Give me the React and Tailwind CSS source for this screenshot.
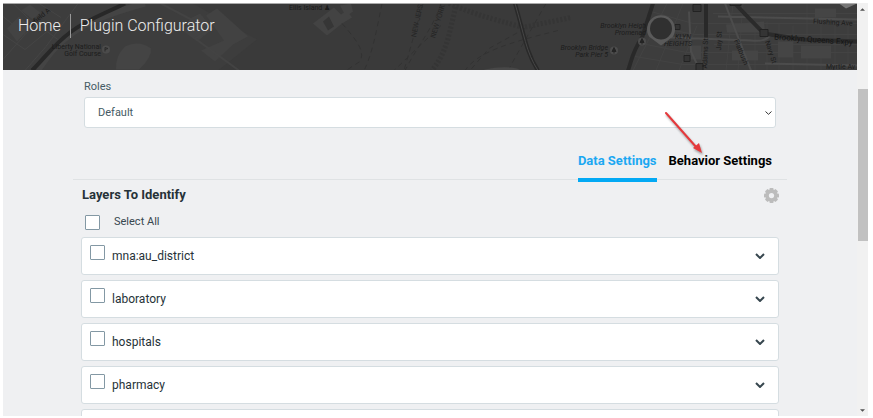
import React, { useState } from 'react';

const layers = ['mna:au_district', 'laboratory', 'hospitals', 'pharmacy'];

const checkboxClass =
  'block size-[15px] shrink-0 appearance-none rounded-[1px] border border-[#8398a4] bg-white checked:bg-[#03a9f4]';

const MapBackground = () => (
  <svg
    className="absolute inset-0 h-full w-full"
    viewBox="0 0 854 67"
    preserveAspectRatio="xMidYMid slice"
    fill="none"
    fontFamily="Roboto, sans-serif"
    aria-hidden="true"
  >
    <rect width="854" height="67" fill="#3a3a3a" />

    {/* west shore */}
    <path d="M0 0H190L254 36L215 67H0Z" fill="#3d3d3d" />
    <path d="M122 43Q136 36 148 45Q149 54 136 66H113Q112 53 122 43Z" fill="#444" />
    <path d="M187 15L197 10L210 25L194 38L181 28ZM203 12L214 5L245 33L230 41L212 58L198 47L221 37Z" fill="#424242" />
    <path d="M158 0L192 18M192 35L236 67M192 35L210 25" stroke="#434343" strokeWidth="2" />
    <path d="M0 13L22 31L45 8M0 31L22 46M10 0L33 22M22 31L0 56M22 46L44 28L63 42M36 0L58 14M75 0L43 43L22 67" stroke="#454545" />
    <path d="M4 25L16 13L28 23L14 38ZM18 7L27 1L37 9L30 16Z" fill="#434343" />
    <path d="M142 0C112 8 91 16 76 25C55 39 47 49 35 67" stroke="#444" strokeWidth="6" />
    <path d="M122 0C102 10 84 16 67 29C51 41 43 53 29 67" stroke="#282828" strokeWidth="4" />
    <circle cx="103" cy="46" r="4" fill="#4b4b4b" />
    <path d="M102 48V44L105 45L102 46" stroke="#2b2b2b" />

    {/* harbor and ferry lines */}
    <path d="M310 20L331 4L338 11L344 7L349 14L339 20L324 32ZM337 2L348 0L350 8L343 13Z" fill="#434343" />
    <path d="M320 18L326 13L331 23L325 27Z" fill="#363636" />
    <path
      d="M339 20C355 38 362 48 357 58L343 67M379 0C373 30 369 51 361 67M420 0L401 67M438 0C430 25 414 43 402 67M438 22L391 67M555 27C507 39 475 48 462 67M522 25L486 45L467 67M543 0L515 49L505 67"
      stroke="#323232"
      strokeDasharray="5 4"
    />
    <path d="M454 0C447 20 447 45 429 67M446 0C479 14 501 18 520 24L568 14" stroke="#353535" strokeWidth="5" strokeDasharray="2 2" />
    <path d="M482 66Q500 62 514 65L518 67H480Z" fill="#484848" />
    <path d="M512 0C521 30 523 49 535 67" stroke="#292929" strokeWidth="4" />
    <path d="M512 0C521 30 523 49 535 67" stroke="#464646" />

    {/* street grid */}
    <path d="M650 0L643 18L622 67H854V0Z" fill="#3d3d3d" />
    <path
      d="M664 0L630 67M680 0L653 67M694 22L676 67M704 0L698 67M730 0L723 67M740 0L735 67M752 18V67M764 18V67M776 20V67M790 22V67M804 0V67M818 4V67M832 22V67M845 22V67M648 8L690 20H854M644 22L692 31H854M638 40L684 49H854M632 53L680 61H854M710 10H854M711 41H854"
      stroke="#434343"
    />
    <path d="M723 21L761 18L762 29H724ZM729 47H755V57H729ZM775 38H790V54H775ZM798 42H828V55H798ZM688 42H698V56H688ZM812 5H833V14H812Z" fill="#454545" />
    <path d="M668 34L748 37Q764 39 768 30M722 0L748 67M715 13L854 16M686 8L688 48L697 67M762 60L854 62" stroke="#4c4c4c" strokeWidth="2" />
    <path d="M650 0L639 34C629 49 629 56 625 67" stroke="#292929" strokeWidth="4" />
    <path d="M703 0V34" stroke="#292929" strokeWidth="4" />
    <path d="M732 0Q744 13 761 30L800 36L854 38" stroke="#2b2b2b" strokeWidth="4" />
    <path d="M690 1H698V8H690ZM727 0H738V2H727ZM757 26H765V33H757ZM681 52H687V58H681ZM693 60H700V67H693ZM672 21H677V26H672Z" fill="#343434" stroke="#222" />
    <path d="M836 0L843 5L854 0Z" fill="#777" />
    <circle cx="639" cy="38" r="4" fill="#4c4c4c" />
    <circle cx="611" cy="47" r="4" fill="#4c4c4c" />
    <path d="M639 35L641 39H637ZM611 44L613 48H609ZM639 38V41M611 47V50" fill="#242424" stroke="#242424" />

    {/* place names */}
    <g fill="#1c1c1c" fontSize="7">
      <text x="98" y="45" textAnchor="end">Liberty National</text>
      <text x="98" y="52" textAnchor="end">Golf Course</text>
      <text x="28" y="24" transform="rotate(-40 28 24)">arfield A</text>
      <text x="286" y="6">Ellis Island ♟</text>
      <g fill="#262626">
        <text x="413" y="34" transform="rotate(-78 413 34)">NEW JERS</text>
        <text x="432" y="35" transform="rotate(-73 432 35)">NEW YORK</text>
      </g>
      <g fontStyle="italic">
        <text x="643" y="24" textAnchor="end">Brooklyn Heigh</text>
        <text x="643" y="31" textAnchor="end">Promenad</text>
        <text x="605" y="46" textAnchor="end">Brooklyn Bridge</text>
        <text x="605" y="53" textAnchor="end">Park Pier 5</text>
        <text x="672" y="35">KLYN</text>
        <text x="661" y="42">HEIGHTS</text>
      </g>
      <text x="704" y="65" transform="rotate(-88 704 65)">Adams St</text>
      <text x="718" y="47" transform="rotate(-88 718 47)">Jay St</text>
      <text x="731" y="37" transform="rotate(68 731 37)">Flatbush</text>
      <text x="762" y="38" transform="rotate(72 762 38)">Navy St</text>
      <text x="810" y="20" transform="rotate(3 810 20)">Flushing Ave</text>
      <text x="771" y="36" transform="rotate(4 771 36)" fontSize="8" fill="#151515">Brooklyn Queens Expy</text>
      <text x="823" y="65">Myrtle Av</text>
    </g>

    <path d="M658 42L646 33A14 14 0 1 1 670 33Z" fill="#5a5a5a" />
    <circle cx="658" cy="25" r="11" fill="#303030" />
  </svg>
);

const ChevronIcon = () => (
  <svg className="h-[6px] w-[10px]" viewBox="0 0 10 6" fill="none" aria-hidden="true">
    <path d="M1 1L5 5L9 1" stroke="#37474f" strokeWidth="2" />
  </svg>
);

const GearIcon = () => (
  <svg className="size-[15px]" viewBox="0 0 16 16" aria-hidden="true">
    <g fill="#bcbcbc">
      <rect x="5.8" y="0" width="4.4" height="16" rx="1" />
      <rect x="5.8" y="0" width="4.4" height="16" rx="1" transform="rotate(45 8 8)" />
      <rect x="5.8" y="0" width="4.4" height="16" rx="1" transform="rotate(90 8 8)" />
      <rect x="5.8" y="0" width="4.4" height="16" rx="1" transform="rotate(135 8 8)" />
      <circle cx="8" cy="8" r="6.3" />
    </g>
    <circle cx="8" cy="8" r="2.8" fill="#eff0f2" />
  </svg>
);

const PointerArrow = () => (
  <svg
    className="pointer-events-none absolute -top-11 -left-2 h-12 w-12 drop-shadow-[1px_2px_1px_rgba(0,0,0,0.35)]"
    viewBox="0 0 48 48"
    aria-hidden="true"
  >
    <path d="M5 4L36 39" stroke="#e5393c" strokeWidth="2" strokeLinecap="round" />
    <path d="M41 44L32 39L38 34Z" fill="#e5393c" />
  </svg>
);

const Header = () => (
  <header className="relative h-[67px] shrink-0 overflow-hidden border-t border-[#aaa] bg-[#3a3a3a]">
    <MapBackground />
    <nav className="relative flex items-center pt-[10px] pl-[15px] text-base leading-6 font-light text-[#eee]">
      <a href="#home" className="pr-[9px]">Home</a>
      <h1 className="border-l border-[#999] pl-[9px]">Plugin Configurator</h1>
    </nav>
  </header>
);

const Scrollbar = () => (
  <div className="flex w-[11px] shrink-0 flex-col items-center bg-[#f1f1f1] pt-[5px] pb-1" aria-hidden="true">
    <svg className="h-[3px] w-[5px]" viewBox="0 0 6 3"><path d="M0 3L3 0L6 3Z" fill="#505050" /></svg>
    <div className="mt-[78px] h-[152px] w-[10px] bg-[#c1c1c1]" />
    <svg className="mt-auto h-[3px] w-[5px]" viewBox="0 0 6 3"><path d="M0 0L3 3L6 0Z" fill="#505050" /></svg>
  </div>
);

const App = () => {
  const [tab, setTab] = useState('data');
  const [checked, setChecked] = useState([]);

  const toggle = (name) =>
    setChecked((prev) => (prev.includes(name) ? prev.filter((n) => n !== name) : [...prev, name]));

  const tabClass = 'block border-b-4 pb-[9px] text-[13px] leading-4 font-bold';
  const cardClass = 'flex h-[38px] items-start justify-between rounded-[3px] border border-[#d5dde1] bg-white pr-[13px] pl-2';

  return (
    <div className="h-screen overflow-hidden bg-white pt-[3px] pr-[5px] pb-[2px] pl-[3px] font-['Roboto',sans-serif]">
      <div className="flex h-full overflow-hidden bg-[#eff0f2]">
        <div className="flex min-w-0 grow flex-col overflow-hidden">
          <Header />

          <main className="mx-[70px] min-h-0 grow overflow-hidden pt-[9px] text-[#263238]">
            <div className="px-[11px]">
              <label htmlFor="roles" className="block text-[11px] leading-4 text-[#455a64]">Roles</label>
              <div className="relative mt-[2px]">
                <select
                  id="roles"
                  className="block h-[31px] w-full appearance-none rounded-[3px] border border-[#d5dde1] bg-white px-[13px] pt-[2px] text-[11px] text-[#455a64]"
                >
                  <option>Default</option>
                </select>
                <svg className="pointer-events-none absolute top-[14px] right-1 h-[4px] w-[7px]" viewBox="0 0 7 4" fill="none" aria-hidden="true">
                  <path d="M0.5 0.5L3.5 3.3L6.5 0.5" stroke="#333" />
                </svg>
              </div>
            </div>

            <div className="mt-[25px] flex justify-end gap-3 border-b border-[#dfe2e4] pr-[15px]" role="tablist">
              <button
                role="tab"
                aria-selected={tab === 'data'}
                onClick={() => setTab('data')}
                className={`-mb-[3px] ${tabClass} ${tab === 'data' ? 'border-[#03a9f4] text-[#1ca8f2]' : 'border-transparent text-black'}`}
              >
                Data Settings
              </button>
              <div className="relative -mb-[3px]">
                <button
                  role="tab"
                  aria-selected={tab === 'behavior'}
                  onClick={() => setTab('behavior')}
                  className={`${tabClass} ${tab === 'behavior' ? 'border-[#03a9f4] text-[#1ca8f2]' : 'border-transparent text-black'}`}
                >
                  Behavior Settings
                </button>
                <PointerArrow />
              </div>
            </div>

            <section className="px-2 pt-[7px]">
              <div className="flex items-center justify-between pl-[1px]">
                <h2 className="text-[13px] leading-4 font-bold">Layers To Identify</h2>
                <button aria-label="Layer options"><GearIcon /></button>
              </div>

              <label className="mt-[11px] flex items-center gap-[14px] pl-1 text-[11px] leading-4 text-[#37474f]">
                <input
                  type="checkbox"
                  className={checkboxClass}
                  checked={checked.length === layers.length}
                  onChange={(e) => setChecked(e.target.checked ? layers : [])}
                />
                Select All
              </label>

              <ul className="mt-[7px] space-y-[5px]">
                {layers.map((name) => (
                  <li key={name} className={cardClass}>
                    <label className="flex items-start gap-[7px] pt-[7px] text-xs leading-4">
                      <input
                        type="checkbox"
                        className={checkboxClass}
                        checked={checked.includes(name)}
                        onChange={() => toggle(name)}
                      />
                      <span className="pt-[3px]">{name}</span>
                    </label>
                    <button className="self-center" aria-label={`Expand ${name}`}><ChevronIcon /></button>
                  </li>
                ))}
                <li className={cardClass} />
              </ul>
            </section>
          </main>
        </div>
        <Scrollbar />
      </div>
    </div>
  );
};

export default App;
